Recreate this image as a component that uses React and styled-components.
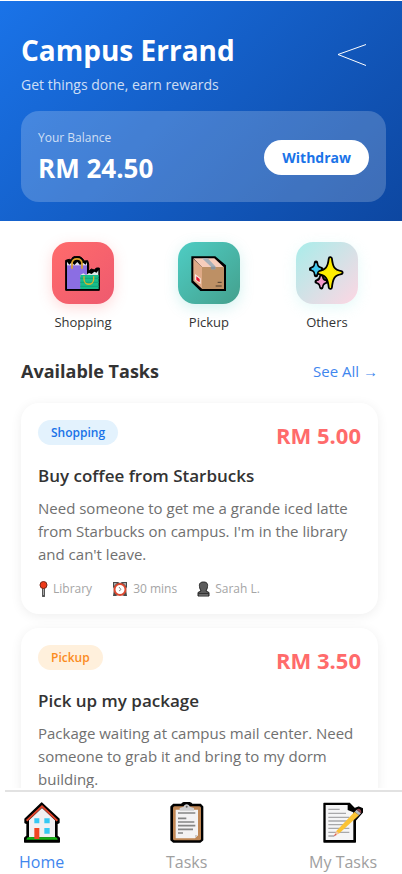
import React from "react";
import styled, { createGlobalStyle } from "styled-components";

const GlobalStyle = createGlobalStyle`
  * { box-sizing: border-box; }
  body { margin: 0; background: #fff; }
  h1, h2, h3, p, ul { margin: 0; padding: 0; }
  ul { list-style: none; }
  button { border: 0; background: none; padding: 0; font: inherit; color: inherit; cursor: pointer; }
  a { text-decoration: none; }
  svg { display: block; }
`;

const Screen = styled.div`
  display: flex;
  flex-direction: column;
  height: 100vh;
  font-family: "Open Sans", "Noto Sans", sans-serif;
  color: #333;
`;

const Content = styled.main`
  flex: 1;
  min-height: 0;
  overflow: hidden;
`;

const Header = styled.header`
  margin-top: 1px;
  padding: 29px 16px 19px 21px;
  color: #fff;
  background: linear-gradient(135deg, #1a73e8 0%, #0d47a1 100%);
`;

const HeaderTop = styled.div`
  display: flex;
  justify-content: space-between;
  padding-right: 19px;
`;

const Title = styled.h1`
  font-size: 28px;
  font-weight: 700;
  line-height: 40px;
`;

const Tagline = styled.p`
  margin-top: 4px;
  font-size: 14px;
  line-height: 22px;
  color: rgba(255, 255, 255, 0.8);
`;

const BackButton = styled.button`
  align-self: flex-start;
  margin-top: 13px;
`;

const BalanceCard = styled.section`
  display: flex;
  align-items: center;
  justify-content: space-between;
  margin-top: 15px;
  padding: 17px 17px 16px;
  border-radius: 18px;
  background: rgba(255, 255, 255, 0.2);
`;

const BalanceLabel = styled.p`
  font-size: 12px;
  line-height: 20px;
  color: rgba(255, 255, 255, 0.75);
`;

const BalanceAmount = styled.p`
  margin-top: 2px;
  font-size: 26px;
  font-weight: 700;
  line-height: 36px;
`;

const WithdrawButton = styled.button`
  padding: 0 18px;
  border-radius: 18px;
  background: #fff;
  color: #1a73e8;
  font-size: 14px;
  font-weight: 700;
  line-height: 35px;
`;

const Shortcuts = styled.nav`
  display: grid;
  grid-template-columns: 8fr 8fr 7fr;
  padding: 21px 20px 0;
`;

const Shortcut = styled.button`
  display: flex;
  flex-direction: column;
  align-items: center;
  gap: 9px;
  font-size: 13px;
  font-weight: 500;
  line-height: 18px;
`;

const Tile = styled.span`
  display: grid;
  place-items: center;
  width: 62px;
  height: 62px;
  border-radius: 17px;
  background: ${(p) => p.$fill};
  box-shadow: 0 4px 14px ${(p) => p.$glow};
`;

const SectionHead = styled.div`
  display: flex;
  align-items: center;
  justify-content: space-between;
  padding: 26px 24px 0 21px;
`;

const SectionTitle = styled.h2`
  font-size: 18px;
  font-weight: 700;
  line-height: 28px;
`;

const SeeAll = styled.a`
  font-size: 15px;
  line-height: 28px;
  color: #3f86ee;
`;

const TaskList = styled.ul`
  display: flex;
  flex-direction: column;
  gap: 14px;
  padding: 18px 24px 0 21px;
`;

const Task = styled.li`
  padding: 17px 17px 15px;
  border-radius: 18px;
  background: #fff;
  box-shadow: 0 2px 12px rgba(0, 0, 0, 0.07);
`;

const TaskHead = styled.div`
  display: flex;
  align-items: flex-start;
  justify-content: space-between;
`;

const Badge = styled.span`
  padding: 1px 13px 0;
  border-radius: 13px;
  background: ${(p) => p.$fill};
  color: ${(p) => p.$ink};
  font-size: 12px;
  font-weight: 600;
  line-height: 24px;
`;

const Price = styled.span`
  font-size: 22px;
  font-weight: 700;
  line-height: 30px;
  color: #ff6b6b;
`;

const TaskTitle = styled.h3`
  margin-top: 13px;
  font-size: 17px;
  font-weight: 600;
  line-height: 26px;
`;

const Description = styled.p`
  margin-top: 8px;
  font-size: 15px;
  line-height: 23px;
  color: #707070;
`;

const Meta = styled.div`
  display: flex;
  gap: 20px;
  margin-top: 13px;
  font-size: 12px;
  line-height: 20px;
  color: #a5a5a5;
`;

const MetaItem = styled.span`
  display: flex;
  align-items: center;
  gap: 5px;
`;

const TabBar = styled.nav`
  display: flex;
  justify-content: space-between;
  margin: 2px 0 0 5px;
  padding: 10px 25px 1px 14px;
  border-top: 2px solid #e2e2e2;
  background: #fff;
`;

const Tab = styled.a`
  display: flex;
  flex-direction: column;
  align-items: center;
  gap: 8px;
  font-size: 16px;
  line-height: 22px;
  color: ${(p) => (p.$active ? "#3f86ee" : "#a0a0a0")};
`;

const BackIcon = () => (
  <svg width="30" height="24" viewBox="0 0 30 24" fill="none" stroke="#fff" strokeWidth="1" aria-hidden="true">
    <path d="M29 1.500 1 11.500 29 22.500" />
  </svg>
);

const BagsIcon = () => (
  <svg width="35" height="35" viewBox="0 0 105 105" aria-hidden="true">
    <path d="M2 13 13 10 18 12 23 4 31 1H43L52 7 58 15 68 14 71 24V46L79 39 88 42 94 36 103 36V103H2Z" fill="#000" stroke="#000" strokeWidth="3" strokeLinejoin="round" />
    <path d="M6 17 13 26 20 19 28 27 37 18 45 27 54 20 62 26 66 18V55H6Z" fill="#e3e0ed" />
    <path d="M6 28H66V99H6Z" fill="#8b6ee3" />
    <path d="M46 57 55 52 63 57 72 51 80 54 88 47 95 50 100 43V62H46Z" fill="#dce9e8" />
    <path d="M46 57H101V99H46Z" fill="#17bd8b" />
    <path d="M46 67H101M46 79H101M46 91H101" stroke="#11a87c" strokeWidth="4" />
    <path d="M21 38V23C22 4 50 4 51 23V38" fill="none" stroke="#dda128" strokeWidth="5" />
    <path d="M57 61V69C57 90 86 90 86 69V61" fill="none" stroke="#d8b42c" strokeWidth="4" />
  </svg>
);

const ParcelIcon = () => (
  <svg width="35" height="35" viewBox="0 0 105 105" aria-hidden="true">
    <path d="M3 3H72L103 29V103H29L3 78Z" fill="#000" stroke="#000" strokeWidth="4" />
    <path d="M7 8 33 33V98L7 74Z" fill="#dfaa87" />
    <path d="M7 7H70L98 33H33Z" fill="#f7cdbc" />
    <path d="M33 33H99V99H33Z" fill="#bd9065" />
    <path d="M33 7H50L73 31V40H60V32Z" fill="#a6afb8" />
    <path d="M60 32H73V40H60Z" fill="#8a929b" />
    <path d="M12 54 29 67V84L12 72Z" fill="#f7e8e3" />
    <path d="M16 61 26 69V79L16 72Z" fill="#e8182e" />
    <path d="M80 79H92M74 90H92" stroke="#4b3b2d" strokeWidth="3" />
  </svg>
);

const SparklesIcon = () => (
  <svg width="35" height="35" viewBox="0 0 105 105" strokeLinejoin="round" stroke="#000" aria-hidden="true">
    <path d="M64 8C67 35 72 45 96 50C72 55 67 65 64 94C61 65 54 55 31 50C54 45 61 35 64 8Z" fill="#000" strokeWidth="15" />
    <path d="M21 20C22 32 25 36 37 39C25 42 22 46 21 57C20 46 17 42 6 39C17 36 20 32 21 20Z" fill="#000" strokeWidth="13" />
    <path d="M37 61C38 71 42 75 51 77C42 79 38 84 37 94C36 84 32 79 23 77C32 75 36 71 37 61Z" fill="#000" strokeWidth="13" />
    <path d="M64 8C67 35 72 45 96 50C72 55 67 65 64 94C61 65 54 55 31 50C54 45 61 35 64 8Z" fill="#ffed00" stroke="#ffed00" strokeWidth="4" />
    <path d="M21 23C22 33 25 37 34 39C25 41 22 45 21 54C20 45 17 41 9 39C17 37 20 33 21 23Z" fill="#42c9ef" stroke="#42c9ef" strokeWidth="4" />
    <path d="M37 63C38 72 42 76 49 77C42 79 38 84 37 92C36 84 32 79 25 77C32 76 36 72 37 63Z" fill="#f59acb" stroke="#f59acb" strokeWidth="4" />
  </svg>
);

const PinIcon = () => (
  <svg width="10" height="16" viewBox="-1 0 10 16" aria-hidden="true">
    <path d="M4.500 7V15" stroke="#555" strokeWidth="3" strokeLinecap="round" />
    <path d="M4.500 7V14" stroke="#aaa" strokeWidth="1" />
    <circle cx="4.500" cy="4" r="3.500" fill="#ee3a19" stroke="#752818" />
  </svg>
);

const ClockIcon = () => (
  <svg width="16" height="16" viewBox="0 0 16 16" aria-hidden="true">
    <path d="M1 1H6L8 2 10 1H15V6L14 8 15 15H12L10 14H6L4 15H1L2 8 1 6Z" fill="#4a4a4a" />
    <path d="M2 2H5L2 5ZM14 2H11L14 5Z" fill="#aaa" />
    <circle cx="8" cy="8.500" r="5.500" fill="#fff" stroke="#dc4930" strokeWidth="2" />
    <path d="M7 6 9 8.500 7 10" fill="none" stroke="#888" />
  </svg>
);

const PersonIcon = () => (
  <svg width="13" height="16" viewBox="0 0 13 16" aria-hidden="true">
    <path d="M6.500 1C10 1 11 3 10.500 5.500C10.500 7.500 9.500 8.500 9 10L12 11.500V15H1V11.500L4 10C3.500 8.500 2.500 7.500 2.500 5.500C2 3 3 1 6.500 1Z" fill="#5c5c5c" stroke="#252525" strokeWidth="1" />
    <path d="M1 12.500H12" stroke="#333" />
    <path d="M2 14H11" stroke="#777" />
  </svg>
);

const HomeIcon = () => (
  <svg width="36" height="41" viewBox="0 0 108 123" aria-hidden="true">
    <path d="M53 3 105 51V62L99 65V102L106 108V120H2V108L9 102V65L3 62V51Z" fill="#000" stroke="#000" strokeWidth="4" strokeLinejoin="round" />
    <path d="M15 55 54 18 93 55V106H15Z" fill="#f1f0f2" />
    <path d="M8 56 54 13 100 56" fill="none" stroke="#df442b" strokeWidth="6" />
    <path d="M7 113C8 104 18 104 23 106H86C93 104 101 106 101 113Z" fill="#16b516" />
    <path d="M31 49H46V64H31ZM61 49H77V64H61ZM61 78H77V95H61Z" fill="#36c9f4" />
    <path d="M31 78H46V111H31Z" fill="#f04420" />
  </svg>
);

const ClipboardIcon = () => (
  <svg width="34" height="41" viewBox="0 0 102 123" aria-hidden="true">
    <path d="M11 7H35C38-1 62-1 66 7H91L98 14V114L91 120H10L3 114V14Z" fill="#000" stroke="#000" strokeWidth="4" strokeLinejoin="round" />
    <rect x="9" y="13" width="84" height="102" rx="5" fill="#c08755" />
    <path d="M17 23H84V100L75 109H17Z" fill="#f3f2f3" />
    <path d="M84 99H75V109Z" fill="#cfc8c3" />
    <path d="M29 26V18L41 14C42 4 58 4 59 14L72 18V26Z" fill="#cfcfd1" />
    <circle cx="50" cy="14" r="3" fill="#666" />
    <path d="M24 33H76M24 49H49M24 60H73M24 71H76M24 82H69M24 93H39" stroke="#858585" strokeWidth="5" />
  </svg>
);

const MemoIcon = () => (
  <svg width="41" height="41" viewBox="0 0 123 123" aria-hidden="true">
    <path d="M3 4H79L95 20 107 15 118 20V31L97 55V120H3Z" fill="#000" stroke="#000" strokeWidth="4" strokeLinejoin="round" />
    <path d="M8 9H74V24L91 31V114H8Z" fill="#f5f5f6" />
    <path d="M16 22H50M16 34H69M16 46H79M16 57H72M16 68H60M16 79H52M54 79H79M16 91H79M16 102H34" stroke="#a8a8aa" strokeWidth="4" />
    <path d="M95 29 108 40 49 94 36 100 40 87Z" fill="#fbc334" />
    <path d="M49 94 33 102 40 87Z" fill="#f3c3a4" />
    <path d="M37 95 32 103 41 99Z" fill="#d45458" />
    <path d="M95 29 101 23 114 34 108 40Z" fill="#b9bdc2" />
    <path d="M101 23C107 15 118 24 114 34Z" fill="#91474b" />
  </svg>
);

const shortcuts = [
  { label: "Shopping", icon: <BagsIcon />, fill: "linear-gradient(135deg, #ff6b6b, #ee5a6f)", glow: "rgba(255, 107, 107, 0.25)" },
  { label: "Pickup", icon: <ParcelIcon />, fill: "linear-gradient(135deg, #4ecdc4, #44a08d)", glow: "rgba(78, 205, 196, 0.25)" },
  { label: "Others", icon: <SparklesIcon />, fill: "linear-gradient(135deg, #a8edea, #fed6e3)", glow: "rgba(168, 237, 234, 0.3)" },
];

const tasks = [
  {
    kind: "Shopping", fill: "#e3f2fd", ink: "#1a73e8", price: "RM 5.00",
    title: "Buy coffee from Starbucks",
    text: "Need someone to get me a grande iced latte from Starbucks on campus. I'm in the library and can't leave.",
    meta: [[<PinIcon />, "Library"], [<ClockIcon />, "30 mins"], [<PersonIcon />, "Sarah L."]],
  },
  {
    kind: "Pickup", fill: "#fff0dc", ink: "#fb8c1e", price: "RM 3.50",
    title: "Pick up my package",
    text: "Package waiting at campus mail center. Need someone to grab it and bring to my dorm building.",
    meta: [],
  },
];

const tabs = [
  { label: "Home", icon: <HomeIcon />, active: true },
  { label: "Tasks", icon: <ClipboardIcon /> },
  { label: "My Tasks", icon: <MemoIcon /> },
];

export default function App() {
  return (
    <Screen>
      <GlobalStyle />
      <Content>
        <Header>
          <HeaderTop>
            <div>
              <Title>Campus Errand</Title>
              <Tagline>Get things done, earn rewards</Tagline>
            </div>
            <BackButton type="button" aria-label="Back"><BackIcon /></BackButton>
          </HeaderTop>
          <BalanceCard>
            <div>
              <BalanceLabel>Your Balance</BalanceLabel>
              <BalanceAmount>RM 24.50</BalanceAmount>
            </div>
            <WithdrawButton type="button">Withdraw</WithdrawButton>
          </BalanceCard>
        </Header>
        <Shortcuts aria-label="Categories">
          {shortcuts.map((s) => (
            <Shortcut key={s.label} type="button">
              <Tile $fill={s.fill} $glow={s.glow}>{s.icon}</Tile>
              {s.label}
            </Shortcut>
          ))}
        </Shortcuts>
        <SectionHead>
          <SectionTitle>Available Tasks</SectionTitle>
          <SeeAll href="#all">See All →</SeeAll>
        </SectionHead>
        <TaskList>
          {tasks.map((t) => (
            <Task key={t.title}>
              <TaskHead>
                <Badge $fill={t.fill} $ink={t.ink}>{t.kind}</Badge>
                <Price>{t.price}</Price>
              </TaskHead>
              <TaskTitle>{t.title}</TaskTitle>
              <Description>{t.text}</Description>
              {t.meta.length > 0 && (
                <Meta>
                  {t.meta.map(([icon, label]) => (
                    <MetaItem key={label}>{icon}{label}</MetaItem>
                  ))}
                </Meta>
              )}
            </Task>
          ))}
        </TaskList>
      </Content>
      <TabBar aria-label="Main">
        {tabs.map((t) => (
          <Tab key={t.label} href="#tab" $active={t.active} aria-current={t.active ? "page" : undefined}>
            {t.icon}
            {t.label}
          </Tab>
        ))}
      </TabBar>
    </Screen>
  );
}
